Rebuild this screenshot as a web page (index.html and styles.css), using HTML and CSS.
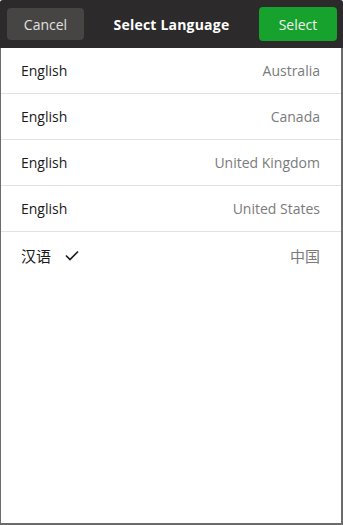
FILE: index.html
```html
<!DOCTYPE html>
<html lang="en">
<head>
  <meta charset="UTF-8">
  <meta name="viewport" content="width=device-width, initial-scale=1.0">
  <title>Select Language</title>
  <link rel="stylesheet" href="styles.css">
</head>
<body>
  <div class="dialog">
    <header class="header">
      <button class="btn btn-cancel">Cancel</button>
      <h1 class="title">Select Language</h1>
      <button class="btn btn-select">Select</button>
    </header>
    <ul class="lang-list">
      <li class="lang-row">
        <span class="lang-name">English</span>
        <span class="lang-region">Australia</span>
      </li>
      <li class="lang-row">
        <span class="lang-name">English</span>
        <span class="lang-region">Canada</span>
      </li>
      <li class="lang-row">
        <span class="lang-name">English</span>
        <span class="lang-region">United Kingdom</span>
      </li>
      <li class="lang-row">
        <span class="lang-name">English</span>
        <span class="lang-region">United States</span>
      </li>
      <li class="lang-row last">
        <span class="lang-name cjk">汉语
          <svg class="check" width="14" height="11" viewBox="0 0 14 11">
            <path d="M1 5.5 L5 9.5 L13 1.5" fill="none" stroke="#1a1a1a" stroke-width="1.6"/>
          </svg>
        </span>
        <span class="lang-region cjk">中国</span>
      </li>
    </ul>
  </div>
</body>
</html>
```

FILE: styles.css
```css
html, body {
  margin: 0;
  height: 100%;
}

body {
  font-family: "Open Sans", "Noto Sans CJK SC", sans-serif;
  font-size: 14px;
  background: #ffffff;
}

.dialog {
  box-sizing: border-box;
  height: 525px;
  display: flex;
  flex-direction: column;
  border-left: 1px solid #6b6b6b;
  border-right: 2px solid #6b6b6b;
  border-bottom: 2px solid #6b6b6b;
  border-radius: 3px 3px 0 0;
  background: #ffffff;
}

.header {
  height: 48px;
  box-sizing: border-box;
  display: flex;
  align-items: center;
  padding: 0 6px 0 7px;
  background: #2c2a2a;
  border-radius: 3px 3px 0 0;
  margin: 0 -2px 0 -1px;
}

.title {
  flex: 1;
  margin: 0;
  text-align: center;
  color: #ffffff;
  font-size: 14px;
  font-weight: bold;
  letter-spacing: 0.2px;
}

.btn {
  border: none;
  font-family: inherit;
  font-size: 14px;
  border-radius: 4px;
  cursor: pointer;
}

.btn-cancel {
  width: 77px;
  height: 32px;
  background: #474544;
  color: #e0e0e0;
}

.btn-select {
  width: 78px;
  height: 34px;
  background: #17a22d;
  color: #f2f2f2;
}

.lang-list {
  list-style: none;
  margin: 0;
  padding: 0;
}

.lang-row {
  height: 46px;
  box-sizing: border-box;
  display: flex;
  align-items: center;
  justify-content: space-between;
  padding: 0 21px 0 20px;
  border-bottom: 1px solid #e2e2e2;
}

.lang-row.last {
  border-bottom: none;
}

.lang-name {
  color: #1a1a1a;
  display: flex;
  align-items: center;
  gap: 14px;
}

.lang-region {
  color: #7b7b7b;
}

.cjk {
  font-size: 15px;
}
```
